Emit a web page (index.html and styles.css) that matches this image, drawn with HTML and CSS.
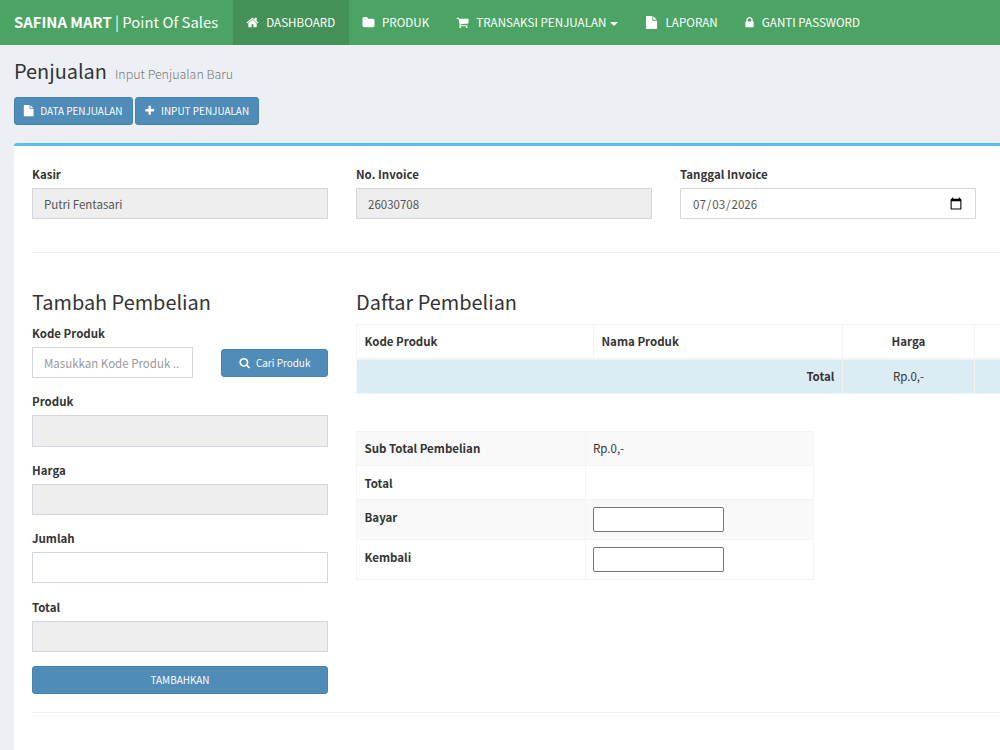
FILE: index.html
```html
<!DOCTYPE html>
<html lang="id">
<head>
    <meta charset="UTF-8">
    <meta name="viewport" content="width=device-width, initial-scale=1.0">
    <title>SAFINA MART | Point Of Sales</title>
    <link rel="stylesheet" href="styles.css">
</head>
<body>

    <!-- Ikon -->
    <svg class="sprite" width="0" height="0">
        <symbol id="home" viewBox="0 0 1792 1792"><path d="M1472 992v480q0 26-19 45t-45 19h-384v-384h-256v384h-384q-26 0-45-19t-19-45v-480q0-1 .5-3t.5-3l575-474 575 474q1 2 1 6zm223-69l-62 74q-8 9-21 11h-3q-13 0-21-7l-692-577-692 577q-12 8-24 7-13-2-21-11l-62-74q-8-10-7-23.5t11-21.5l719-599q32-26 76-26t76 26l244 204v-195q0-14 9-23t23-9h192q14 0 23 9t9 23v408l219 182q10 8 11 21.5t-7 23.5z"/></symbol>
        <symbol id="folder" viewBox="0 0 1792 1792"><path d="M1728 608v704q0 92-66 158t-158 66h-1216q-92 0-158-66t-66-158v-960q0-92 66-158t158-66h320q92 0 158 66t66 158v32h672q92 0 158 66t66 158z"/></symbol>
        <symbol id="cart" viewBox="0 0 1792 1792"><path d="M704 1536q0 52-38 90t-90 38-90-38-38-90 38-90 90-38 90 38 38 90zm896 0q0 52-38 90t-90 38-90-38-38-90 38-90 90-38 90 38 38 90zm128-1088v512q0 24-16.500 42.500t-40.500 21.500l-1044 122q13 60 13 70 0 16-24 64h920q26 0 45 19t19 45-19 45-45 19h-1024q-26 0-45-19t-19-45q0-11 8-31.500t16-36 21.500-40 15.500-29.500l-177-823h-204q-26 0-45-19t-19-45 19-45 45-19h256q16 0 28.500 6.500t19.500 15.500 13 24.500 8 26 5.500 29.500 4.500 26h1201q26 0 45 19t19 45z"/></symbol>
        <symbol id="file" viewBox="0 0 1792 1792"><path d="M1152 512v-472q22 14 36 28l408 408q14 14 28 36h-472zm-128 32q0 40 28 68t68 28h544v1056q0 40-28 68t-68 28h-1344q-40 0-68-28t-28-68v-1600q0-40 28-68t68-28h800v544z"/></symbol>
        <symbol id="lock" viewBox="0 0 1792 1792"><path d="M640 768h512v-192q0-106-75-181t-181-75-181 75-75 181v192zm832 96v576q0 40-28 68t-68 28h-960q-40 0-68-28t-28-68v-576q0-40 28-68t68-28h32v-192q0-184 132-316t316-132 316 132 132 316v192h32q40 0 68 28t28 68z"/></symbol>
        <symbol id="plus" viewBox="0 0 1792 1792"><path d="M1600 736v192q0 40-28 68t-68 28h-416v416q0 40-28 68t-68 28h-192q-40 0-68-28t-28-68v-416h-416q-40 0-68-28t-28-68v-192q0-40 28-68t68-28h416v-416q0-40 28-68t68-28h192q40 0 68 28t28 68v416h416q40 0 68 28t28 68z"/></symbol>
        <symbol id="search" viewBox="0 0 1792 1792"><path d="M1216 832q0-185-131.500-316.500t-316.500-131.500-316.500 131.500-131.500 316.500 131.500 316.500 316.500 131.500 316.500-131.500 131.500-316.500zm512 832q0 52-38 90t-90 38q-54 0-90-38l-343-342q-179 124-399 124-143 0-273.500-55.500t-225-150-150-225-55.500-273.500 55.500-273.500 150-225 225-150 273.500-55.500 273.500 55.500 225 150 150 225 55.500 273.500q0 220-124 399l343 343q37 37 37 90z"/></symbol>
    </svg>

    <!-- Navbar -->
    <header class="navbar">
        <a class="brand" href="#"><b>SAFINA MART</b> | Point Of Sales</a>
        <nav class="menu">
            <a class="active" href="#"><svg class="icon"><use href="#home"/></svg>DASHBOARD</a>
            <a href="#"><svg class="icon"><use href="#folder"/></svg>PRODUK</a>
            <a href="#"><svg class="icon"><use href="#cart"/></svg>TRANSAKSI PENJUALAN<span class="caret"></span></a>
            <a href="#"><svg class="icon"><use href="#file"/></svg>LAPORAN</a>
            <a href="#"><svg class="icon icon-lock"><use href="#lock"/></svg>GANTI PASSWORD</a>
        </nav>
    </header>

    <main class="content">
        <div class="page-header">
            <h1>Penjualan</h1>
            <small>Input Penjualan Baru</small>
        </div>

        <div class="toolbar">
            <a class="btn" href="#"><svg class="icon"><use href="#file"/></svg>DATA PENJUALAN</a>
            <a class="btn" href="#"><svg class="icon"><use href="#plus"/></svg>INPUT PENJUALAN</a>
        </div>

        <div class="box">
            <!-- Data invoice -->
            <div class="row invoice">
                <div class="form-group">
                    <label for="kasir">Kasir</label>
                    <input class="form-control" type="text" id="kasir" value="Putri Fentasari" readonly>
                </div>
                <div class="form-group">
                    <label for="invoice">No. Invoice</label>
                    <input class="form-control" type="text" id="invoice" value="26030708" readonly>
                </div>
                <div class="form-group">
                    <label for="tanggal">Tanggal Invoice</label>
                    <input class="form-control" type="date" id="tanggal" value="2026-07-03">
                </div>
            </div>

            <hr>

            <div class="row pembelian">
                <!-- Form tambah pembelian -->
                <form class="tambah">
                    <h3>Tambah Pembelian</h3>
                    <div class="form-group">
                        <label for="kode">Kode Produk</label>
                        <div class="search-row">
                            <input class="form-control" type="text" id="kode" placeholder="Masukkan Kode Produk ..">
                            <button class="btn" type="button"><svg class="icon"><use href="#search"/></svg>Cari Produk</button>
                        </div>
                    </div>
                    <div class="form-group">
                        <label for="produk">Produk</label>
                        <input class="form-control" type="text" id="produk" readonly>
                    </div>
                    <div class="form-group">
                        <label for="harga">Harga</label>
                        <input class="form-control" type="text" id="harga" readonly>
                    </div>
                    <div class="form-group">
                        <label for="jumlah">Jumlah</label>
                        <input class="form-control" type="text" id="jumlah">
                    </div>
                    <div class="form-group">
                        <label for="total">Total</label>
                        <input class="form-control" type="text" id="total" readonly>
                    </div>
                    <button class="btn btn-block" type="button">TAMBAHKAN</button>
                </form>

                <!-- Daftar pembelian -->
                <div class="daftar">
                    <h3>Daftar Pembelian</h3>
                    <table class="table daftar-table">
                        <thead>
                            <tr>
                                <th class="col-kode">Kode Produk</th>
                                <th class="col-nama">Nama Produk</th>
                                <th class="col-harga center">Harga</th>
                                <th></th>
                            </tr>
                        </thead>
                        <tbody>
                            <tr class="info">
                                <td class="right" colspan="2"><b>Total</b></td>
                                <td class="center">Rp.0,-</td>
                                <td></td>
                            </tr>
                        </tbody>
                    </table>

                    <table class="table total-table">
                        <tr><th>Sub Total Pembelian</th><td>Rp.0,-</td></tr>
                        <tr><th>Total</th><td></td></tr>
                        <tr class="tall"><th>Bayar</th><td><input type="text" class="bayar"></td></tr>
                        <tr class="tall"><th>Kembali</th><td><input type="text" class="bayar"></td></tr>
                    </table>
                </div>
            </div>

            <hr>
        </div>
    </main>

</body>
</html>
```
FILE: styles.css
```css
* { box-sizing: border-box; }
html { overflow: hidden; }
body { margin: 0; height: 750px; overflow: hidden; background: #ecf0f5; color: #333; font-family: "Noto Sans CJK SC", "Source Sans Pro", sans-serif; font-size: 11.5px; line-height: 18px; }
a { color: inherit; text-decoration: none; }
h1, h3 { margin: 0; font-weight: 400; }
b, th, label { font-weight: 700; }
input, button { font-family: inherit; font-size: inherit; }
hr { margin: 0; border: 0; border-top: 1px solid #eee; }
.sprite { position: absolute; }
.icon { width: 13px; height: 13px; fill: currentColor; flex: none; overflow: visible; }

.navbar { display: flex; height: 45px; background: #4ba463; color: #fff; }
.brand { width: 233px; padding-left: 14px; font-size: 14.85px; line-height: 44px; white-space: nowrap; }
.menu { display: flex; font-size: 11.6px; letter-spacing: 0.03px; }
.menu a { display: flex; align-items: center; padding: 0 13.8px 0 13px; line-height: 45px; white-space: nowrap; }
.menu .icon { margin-right: 7.2px; }
.menu .icon-lock { margin-left: -1.2px; margin-right: 5.5px; }
.menu .active { padding-right: 13.6px; background: #449158; }
.caret { margin: 2px 0 0 4px; border: 4px solid transparent; border-top-color: #fff; border-bottom: 0; }

.content { width: 1332px; padding: 0 14px; }
.page-header { display: flex; align-items: baseline; gap: 8px; height: 52px; padding-top: 12px; }
.page-header h1 { font-size: 19.9px; line-height: 28px; }
.page-header small { font-size: 12.45px; font-weight: 300; color: #777; }
.toolbar { display: flex; gap: 2px; height: 46px; }

.btn { display: inline-flex; align-items: center; justify-content: center; height: 28px; padding: 0 9.2px 0 8.1px; border: 1px solid #4682ae; border-radius: 3px; background: #4f8cb8; color: #fff; font-size: 9.95px; line-height: 16px; white-space: nowrap; cursor: pointer; }
.btn .icon { width: 11.4px; height: 11.4px; margin-right: 5.8px; }
.btn-block { display: flex; width: 100%; padding: 0 8px; }

.box { height: 640px; padding: 19px 18px 0; border-top: 3px solid #56c0ed; border-radius: 3px; background: #fff; }
.row { display: flex; gap: 28px; }
.invoice { height: 87px; }
.invoice .form-group { width: 296px; }
.form-group { margin-bottom: 14.2px; }
.form-group label { display: block; margin-bottom: 5px; }
.form-control { display: block; width: 100%; height: 31.2px; padding: 0 11px; border: 1px solid #d2d6de; border-radius: 0; background: #fff; color: #555; }
.form-control[readonly] { background: #eee; }
.form-control::placeholder { color: #999; }
.form-control::-webkit-calendar-picker-indicator { width: 14px; height: 14px; padding: 1px; background-size: contain; }
.search-row { display: flex; align-items: center; justify-content: space-between; }
.search-row .form-control { width: 161px; }
.search-row .btn { width: 107px; padding-right: 8px; }

.pembelian { height: 459px; padding-top: 35px; }
.pembelian h3 { height: 36px; font-size: 19.9px; line-height: 28px; }
.tambah { width: 296px; }
.daftar { width: 944px; }

.table { border-collapse: collapse; table-layout: fixed; }
.table th, .table td { height: 34.3px; padding: 0 7.5px; border: 1px solid #f4f4f4; text-align: left; }
.table .center { text-align: center; }
.table .right { text-align: right; }
.daftar-table { width: 944px; }
.daftar-table th { border-bottom-width: 2px; }
.col-kode { width: 237px; }
.col-nama { width: 249px; }
.col-harga { width: 132px; }
.info td { background: #dcecf5; }
.total-table { width: 458px; margin-top: 37px; }
.total-table tr:nth-child(odd) { background: #f9f9f9; }
.total-table .tall th { height: 40px; padding-top: 8px; vertical-align: top; }
.bayar { display: block; width: 131px; height: 25px; border: 1px solid #767676; border-radius: 2px; background: #fff; }
```
